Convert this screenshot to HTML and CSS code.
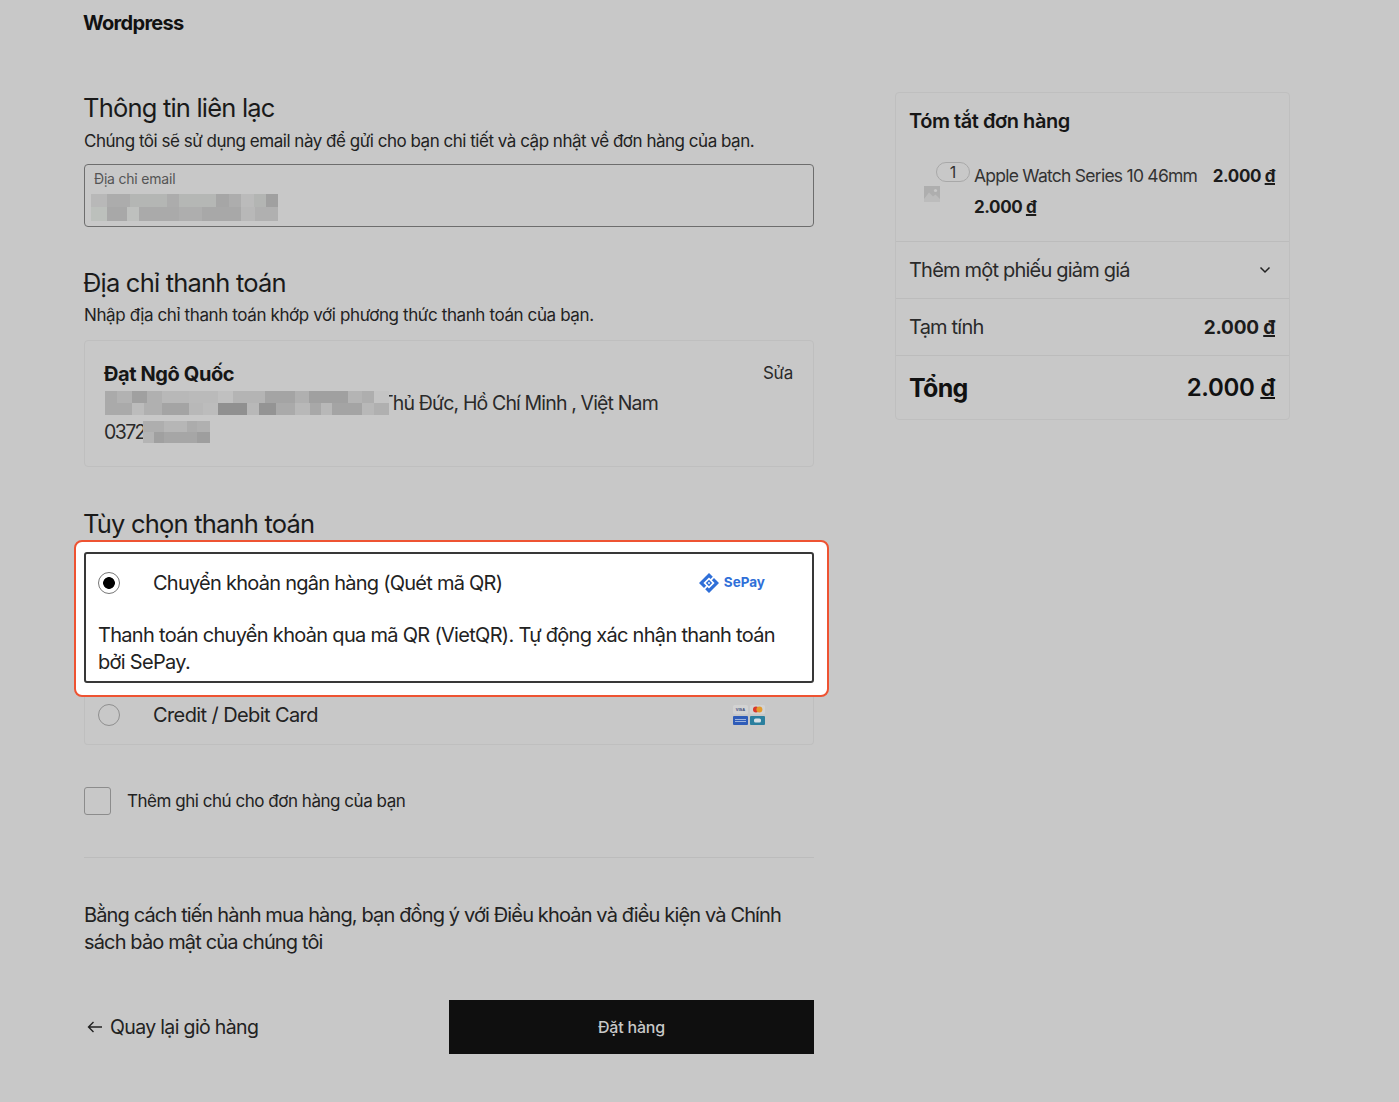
FILE: index.html
```html
<!DOCTYPE html>
<html lang="vi">
<head>
<meta charset="utf-8">
<title>Thanh toán</title>
<link rel="stylesheet" href="styles.css">
</head>
<body>
<header class="site-header">Wordpress</header>
<main class="layout">
  <div class="col-left">
    <section class="contact">
      <h2 class="sec-title">Thông tin liên lạc</h2>
      <p class="sec-sub">Chúng tôi sẽ sử dụng email này để gửi cho bạn chi tiết và cập nhật về đơn hàng của bạn.</p>
      <div class="email-field">
        <span class="email-label">Địa chỉ email</span>
        <svg class="mosaic-email" viewBox="63 132 561 81" preserveAspectRatio="none" shape-rendering="crispEdges">
          <rect x="63" y="132" width="47" height="40" fill="#b8b8b8"/><rect x="110" y="132" width="70" height="40" fill="#acacac"/><rect x="180" y="132" width="110" height="40" fill="#b4b6b4"/><rect x="290" y="132" width="37" height="40" fill="#acacac"/><rect x="327" y="132" width="110" height="40" fill="#b5b7b5"/><rect x="437" y="132" width="40" height="40" fill="#a6a6a6"/><rect x="477" y="132" width="36" height="40" fill="#adadad"/><rect x="513" y="132" width="39" height="40" fill="#bbbbbb"/><rect x="552" y="132" width="35" height="40" fill="#b3b5b3"/><rect x="587" y="132" width="37" height="40" fill="#a0a0a0"/>
          <rect x="63" y="172" width="47" height="41" fill="#bcc0bc"/><rect x="110" y="172" width="62" height="41" fill="#a8a8a8"/><rect x="172" y="172" width="35" height="41" fill="#bec0be"/><rect x="207" y="172" width="120" height="41" fill="#aaaaaa"/><rect x="327" y="172" width="70" height="41" fill="#aeaeae"/><rect x="397" y="172" width="116" height="41" fill="#a8a8a8"/><rect x="513" y="172" width="42" height="41" fill="#b8b8b8"/><rect x="555" y="172" width="69" height="41" fill="#b0b0b0"/>
        </svg>
      </div>
    </section>

    <section class="billing">
      <h2 class="sec-title">Địa chỉ thanh toán</h2>
      <p class="sec-sub">Nhập địa chỉ thanh toán khớp với phương thức thanh toán của bạn.</p>
      <div class="address-card">
        <div class="address-body">
          <div class="address-name">Đạt Ngô Quốc</div>
          <div class="address-line"><svg class="mosaic-address" viewBox="105 725 852 72" preserveAspectRatio="none" shape-rendering="crispEdges">
            <rect x="105" y="725" width="35" height="36" fill="#aaaaaa"/><rect x="140" y="725" width="46" height="36" fill="#b2b2b2"/><rect x="186" y="725" width="45" height="36" fill="#a0a0a0"/><rect x="231" y="725" width="45" height="36" fill="#b0b0b0"/><rect x="276" y="725" width="81" height="36" fill="#b8b8b8"/><rect x="357" y="725" width="88" height="36" fill="#bababa"/><rect x="445" y="725" width="43" height="36" fill="#c0c0c0"/><rect x="488" y="725" width="97" height="36" fill="#b4b4b4"/><rect x="585" y="725" width="89" height="36" fill="#a4a4a4"/><rect x="674" y="725" width="43" height="36" fill="#b0b0b0"/><rect x="717" y="725" width="116" height="36" fill="#a0a0a0"/><rect x="833" y="725" width="44" height="36" fill="#b4b4b4"/><rect x="877" y="725" width="36" height="36" fill="#aeaeae"/><rect x="913" y="725" width="44" height="36" fill="#c4c4c4"/>
            <rect x="105" y="761" width="81" height="36" fill="#aaaaaa"/><rect x="186" y="761" width="36" height="36" fill="#bcbcbc"/><rect x="222" y="761" width="54" height="36" fill="#b0b0b0"/><rect x="276" y="761" width="81" height="36" fill="#a4a4a4"/><rect x="357" y="761" width="43" height="36" fill="#b8b8b8"/><rect x="400" y="761" width="45" height="36" fill="#bcbcbc"/><rect x="445" y="761" width="87" height="36" fill="#909090"/><rect x="532" y="761" width="35" height="36" fill="#b8b8b8"/><rect x="567" y="761" width="50" height="36" fill="#949494"/><rect x="617" y="761" width="57" height="36" fill="#aaaaaa"/><rect x="674" y="761" width="46" height="36" fill="#b8b8b8"/><rect x="720" y="761" width="33" height="36" fill="#a8a8a8"/><rect x="753" y="761" width="33" height="36" fill="#b8b8b8"/><rect x="786" y="761" width="91" height="36" fill="#a4a4a4"/><rect x="877" y="761" width="36" height="36" fill="#b8b8b8"/><rect x="913" y="761" width="44" height="36" fill="#b0b0b0"/>
          </svg><span class="address-rest">Thủ Đức, Hồ Chí Minh , Việt Nam</span></div>
          <div class="address-line"><span class="phone-start">0372</span><svg class="mosaic-phone" viewBox="218 810 200 65" preserveAspectRatio="none" shape-rendering="crispEdges">
            <rect x="218" y="810" width="62" height="32" fill="#aeaeae"/><rect x="280" y="810" width="70" height="32" fill="#b6b6b6"/><rect x="350" y="810" width="30" height="32" fill="#acacac"/><rect x="380" y="810" width="38" height="32" fill="#b0b0b0"/>
            <rect x="218" y="842" width="32" height="33" fill="#b4b4b4"/><rect x="250" y="842" width="30" height="33" fill="#a0a0a0"/><rect x="280" y="842" width="100" height="33" fill="#a6a6a6"/><rect x="380" y="842" width="38" height="33" fill="#9e9e9e"/>
          </svg></div>
        </div>
        <span class="address-edit">Sửa</span>
      </div>
    </section>

    <section class="payment">
      <h2 class="sec-title">Tùy chọn thanh toán</h2>
      <div class="pay-options">
        <div class="pay-selected">
          <div class="pay-row">
            <span class="radio radio-on"></span>
            <span class="pay-label">Chuyển khoản ngân hàng (Quét mã QR)</span>
            <span class="sepay">
              <svg class="sepay-icon" viewBox="0 0 20 20">
                <path d="M10 0 L13.8 3.8 L11.6 6 L10 4.4 L4.4 10 L7.2 12.8 L5 15 L0 10 Z" fill="#2f6fd8"/>
                <path d="M10 20 L6.2 16.2 L8.4 14 L10 15.6 L15.6 10 L12.8 7.2 L15 5 L20 10 Z" fill="#2f6fd8"/>
                <path d="M10 6.8 L13.2 10 L10 13.2 L6.8 10 Z M10 8.8 L8.8 10 L10 11.2 L11.2 10 Z" fill="#2f6fd8" fill-rule="evenodd"/>
              </svg>
              <span class="sepay-text">SePay</span>
            </span>
          </div>
          <p class="pay-desc">Thanh toán chuyển khoản qua mã QR (VietQR). Tự động xác nhận thanh toán bởi SePay.</p>
        </div>
        <div class="pay-card">
          <span class="radio"></span>
          <span class="pay-label">Credit / Debit Card</span>
          <svg class="cards" viewBox="0 0 32 20">
            <rect x="0" y="0" width="15" height="9" rx="1.5" fill="#d2d2d2"/>
            <text x="7.5" y="6.4" text-anchor="middle" class="visa">VISA</text>
            <rect x="17" y="0" width="15" height="9" rx="1.5" fill="#d2d2d2"/>
            <circle cx="23" cy="4.5" r="3" fill="#d9382a"/><circle cx="26.4" cy="4.5" r="3" fill="#e49a2b"/>
            <rect x="0" y="11" width="15" height="9" rx="1" fill="#2f5cb8"/>
            <rect x="2" y="14" width="11" height="1" fill="#9fb4dc"/><rect x="2" y="16" width="11" height="1" fill="#9fb4dc"/>
            <rect x="17" y="11" width="15" height="9" rx="1" fill="#2a7f9e"/>
            <rect x="21" y="13.5" width="7" height="4" rx="1.6" fill="#d5dfe4"/>
          </svg>
        </div>
      </div>
    </section>

    <label class="note">
      <span class="checkbox"></span>
      <span class="note-text">Thêm ghi chú cho đơn hàng của bạn</span>
    </label>

    <hr class="rule">

    <p class="terms">Bằng cách tiến hành mua hàng, bạn đồng ý với Điều khoản và điều kiện và Chính sách bảo mật của chúng tôi</p>

    <div class="actions">
      <a class="back"><svg class="back-arrow" viewBox="0 0 16 12"><path d="M15 6H1.5M6.5 1 1.5 6l5 5" fill="none" stroke="#222" stroke-width="1.4"/></svg>Quay lại giỏ hàng</a>
      <button class="place-order">Đặt hàng</button>
    </div>
  </div>

  <aside class="summary">
    <div class="sum-top">
      <h3 class="sum-title">Tóm tắt đơn hàng</h3>
      <div class="item">
        <div class="thumb">
          <span class="qty">1</span>
          <svg class="thumb-img" viewBox="0 0 16 16"><rect width="16" height="16" fill="#aeaeae"/><circle cx="11.5" cy="4.5" r="1.6" fill="#c8c8c8"/><path d="M0 13 5 6.5 9 10.5 11.5 8.5 16 13V16H0Z" fill="#bcbcbc"/></svg>
        </div>
        <div class="item-info">
          <div class="item-head">
            <span class="item-name">Apple Watch Series 10 46mm</span>
            <strong class="item-total">2.000 <u>đ</u></strong>
          </div>
          <strong class="item-price">2.000 <u>đ</u></strong>
        </div>
      </div>
    </div>
    <div class="sum-row">
      <span>Thêm một phiếu giảm giá</span>
      <svg class="chev" viewBox="0 0 12 8"><path d="M1.5 1.5 6 6l4.5-4.5" fill="none" stroke="#222" stroke-width="1.5"/></svg>
    </div>
    <div class="sum-row">
      <span>Tạm tính</span>
      <strong class="sum-val">2.000 <u>đ</u></strong>
    </div>
    <div class="sum-total">
      <span>Tổng</span>
      <span class="total-val">2.000 <u>đ</u></span>
    </div>
  </aside>
</main>
</body>
</html>
```
FILE: styles.css
```css
* { box-sizing: border-box; }
html, body { margin: 0; padding: 0; }
body {
  background: #c8c8c8;
  color: #161616;
  font-family: Inter, "Noto Sans", sans-serif;
  height: 1102px;
  overflow: hidden;
  padding-left: 84px;
}
.site-header { height: 46px; margin-left: -1px; line-height: 46px; font-size: 20px; font-weight: 700; letter-spacing: -0.7px; color: #111; }
.layout { display: flex; align-items: flex-start; gap: 81px; }
.col-left { width: 730px; flex: none; }
.sec-title { margin: 0 0 0 -1px; font-size: 25.5px; line-height: 32px; font-weight: 420; letter-spacing: -0.8px; color: #1a1a1a; }
.sec-sub { margin: 3px 0 0; font-size: 17px; line-height: 26px; letter-spacing: -0.39px; color: #222; }
.contact { padding-top: 46px; }
.contact .sec-sub { margin-top: 4px; letter-spacing: -0.48px; }
.email-field { position: relative; height: 63px; margin-top: 10px; border: 1px solid #6d6d6d; border-radius: 4px; padding: 5px 9px; }
.email-label { display: block; font-size: 14px; line-height: 18px; letter-spacing: -0.2px; color: #555; }
.mosaic-email { position: absolute; left: 6px; top: 29px; width: 187px; height: 27px; }
.billing { padding-top: 40px; }
.address-card { display: flex; justify-content: space-between; height: 127px; margin-top: 12px; border: 1px solid #bfbfbf; border-radius: 4px; padding: 19px 20px; }
.address-body { min-width: 0; }
.address-name { margin-left: -1px; font-size: 20px; line-height: 28px; font-weight: 700; letter-spacing: -0.4px; color: #161616; }
.address-line { display: flex; align-items: center; height: 29px; font-size: 19.5px; letter-spacing: -0.85px; color: #2a2a2a; white-space: nowrap; }
.mosaic-address { position: relative; z-index: 1; width: 284px; height: 24px; flex: none; }
.address-rest { margin-left: -8px; }
.phone-start { width: 38px; flex: none; margin-left: -1px; letter-spacing: -1.6px; }
.mosaic-phone { width: 67px; height: 22px; position: relative; flex: none; margin-left: 1px; }
.address-edit { font-size: 17px; line-height: 26px; letter-spacing: -0.3px; color: #2a2a2a; }
.payment { padding-top: 41px; }
.pay-options { margin-top: 12px; }
.pay-selected { position: relative; z-index: 1; height: 131px; padding: 0 14px; }
.pay-selected::before { content: ""; position: absolute; z-index: -2; left: -10px; right: -15px; top: -12px; bottom: -14px; background: #fff; border: 2px solid #ee5332; border-radius: 8px; }
.pay-selected::after { content: ""; position: absolute; z-index: -1; inset: 0; background: #fff; border: 2px solid #383838; border-radius: 3px; }
.pay-row { display: flex; align-items: center; height: 62px; }
.radio { width: 22px; height: 22px; border-radius: 50%; border: 1px solid #8f8f8f; flex: none; }
.radio-on { background: radial-gradient(circle, #000 0, #000 5.5px, #fff 6.2px); border-color: #777; }
.pay-label { margin-left: 33px; font-size: 20px; letter-spacing: -0.75px; color: #222; flex: 1; }
.sepay { display: flex; align-items: center; gap: 5px; margin-right: 35px; }
.sepay-icon { width: 20px; height: 20px; }
.sepay-text { margin-top: -2px; font-size: 13.5px; font-weight: 700; color: #2f6fd8; letter-spacing: 0; }
.pay-desc { margin: 8px 0 0; font-size: 20px; line-height: 27px; letter-spacing: -0.7px; color: #222; }
.pay-card { display: flex; align-items: center; height: 62px; padding: 2px 48px 0 13px; border: 1px solid #bfbfbf; border-top: 0; border-radius: 0 0 4px 4px; }
.pay-card .pay-label { letter-spacing: -0.6px; }
.cards { width: 32px; height: 20px; flex: none; }
.visa { font-size: 4px; font-weight: 700; fill: #3b4a7a; font-family: "Liberation Sans", sans-serif; }
.note { display: flex; align-items: center; gap: 16px; margin-top: 42px; height: 28px; }
.checkbox { width: 27px; height: 28px; border: 1px solid #8c8c8c; border-radius: 3px; flex: none; }
.note-text { font-size: 17px; letter-spacing: -0.47px; color: #222; }
.rule { margin: 42px 0 0; border: 0; border-top: 1px solid #bcbcbc; }
.terms { margin: 44px 0 0; font-size: 20px; line-height: 27px; letter-spacing: -0.86px; color: #222; }
.actions { display: flex; justify-content: space-between; align-items: center; margin-top: 44px; }
.back { display: flex; align-items: center; gap: 7px; font-size: 19.5px; letter-spacing: -0.65px; color: #222; }
.back-arrow { width: 16px; height: 12px; margin-left: 3px; }
.place-order { width: 365px; height: 54px; background: #0f0f0f; border: 0; color: #c8c8c8; font: 500 16px Inter, sans-serif; letter-spacing: -0.2px; }
.summary { width: 395px; flex: none; margin-top: 46px; border: 1px solid #bfbfbf; border-radius: 4px; }
.sum-top { height: 148px; padding: 14px 14px 0; }
.sum-title { margin: 0 0 0 -1px; font-size: 20px; line-height: 28px; font-weight: 600; letter-spacing: -0.45px; color: #161616; }
.item { display: flex; margin-top: 27px; }
.thumb { position: relative; width: 64px; height: 60px; flex: none; }
.qty { position: absolute; left: 26px; top: 0; width: 34px; height: 20px; border: 1px solid #a8a8a8; border-radius: 10px; text-align: center; font-size: 16px; line-height: 18px; color: #333; }
.thumb-img { position: absolute; left: 14px; top: 24px; width: 16px; height: 16px; }
.item-info { flex: 1; min-width: 0; padding-top: 1px; }
.item-head { display: flex; justify-content: space-between; font-size: 17.5px; line-height: 26px; white-space: nowrap; }
.item-name { letter-spacing: -0.75px; color: #333; }
.item-total, .item-price { font-size: 17px; font-weight: 700; letter-spacing: -0.4px; color: #1c1c1c; }
.item-price { display: block; margin-top: 5px; line-height: 26px; }
u { text-decoration-thickness: 1.5px; text-underline-offset: 1px; }
.sum-row { display: flex; justify-content: space-between; align-items: center; height: 57px; padding: 0 14px 0 13px; border-top: 1px solid #bcbcbc; font-size: 20px; letter-spacing: -0.8px; color: #2a2a2a; }
.chev { width: 12px; height: 8px; margin-right: 4px; }
.sum-val { font-size: 19px; font-weight: 700; letter-spacing: -0.2px; color: #1c1c1c; }
.sum-total { display: flex; justify-content: space-between; align-items: center; height: 64px; padding: 0 14px 0 13px; border-top: 1px solid #bcbcbc; font-size: 25px; color: #111; }
.sum-total span:first-child { font-weight: 700; letter-spacing: -0.7px; }
.total-val { font-size: 24px; font-weight: 600; letter-spacing: -0.3px; }
```
